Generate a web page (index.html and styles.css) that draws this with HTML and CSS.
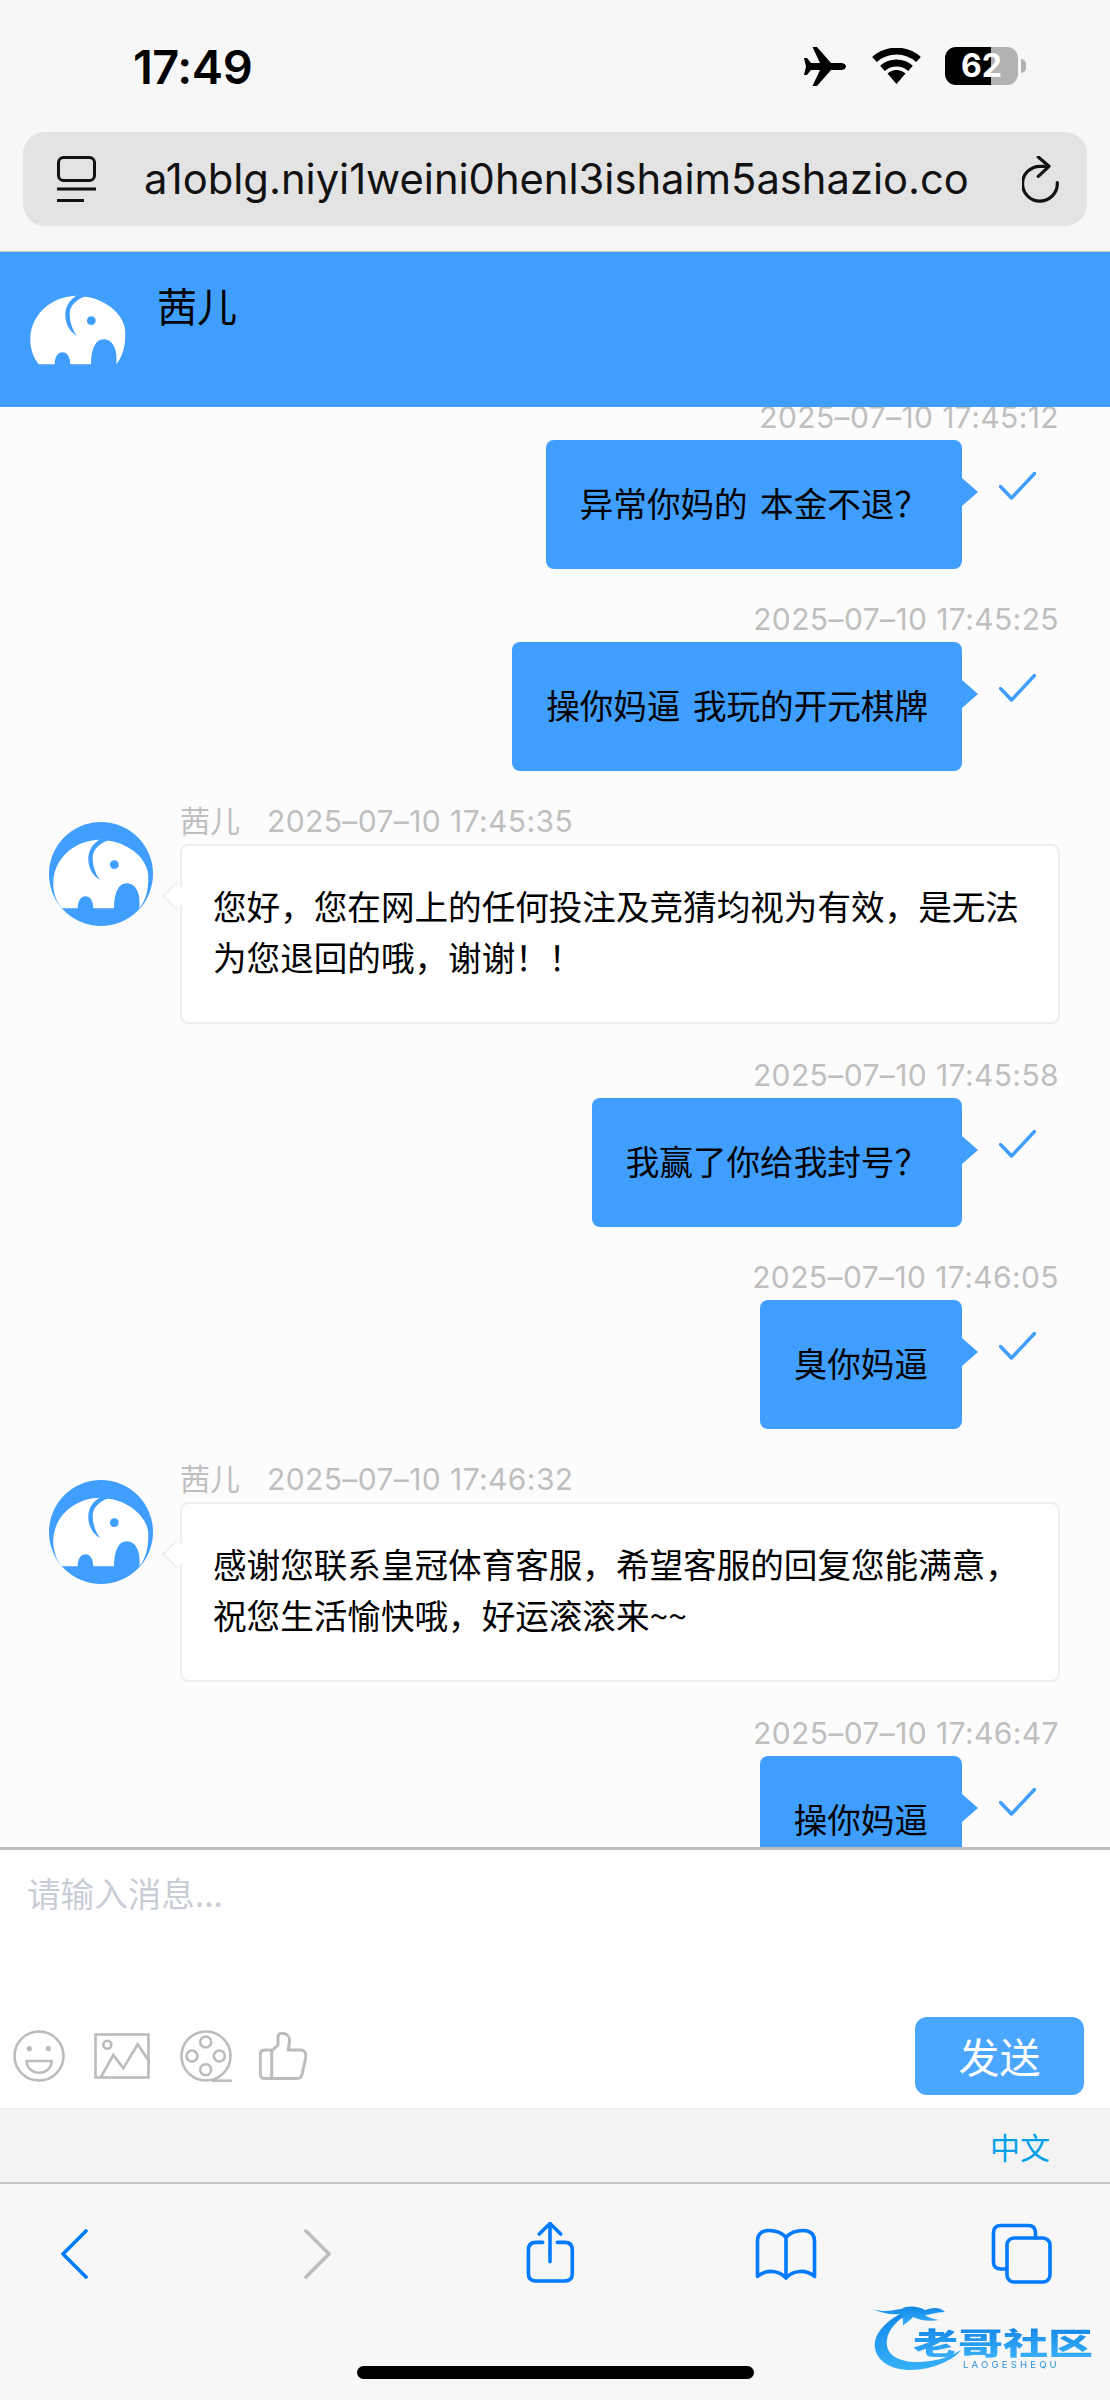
FILE: index.html
```html
<!DOCTYPE html>
<html lang="zh-CN">
<head>
<meta charset="utf-8">
<title>茜儿</title>
<link rel="stylesheet" href="styles.css">
</head>
<body>
<svg class="defs" width="0" height="0" aria-hidden="true">
  <symbol id="elephant" viewBox="0 0 104 104">
    <path class="el-body" d="M12.7 86.3C6 78 4 68 4.3 60 5 36 26 18 51 17.7L60 18.7C82 22 99 38 99.3 54 99.5 68 97 78 90.3 86.3 92 70 86 61.3 77.6 61.3 70 61.3 65 70 65 86.3L44.3 86.3C44.3 79 41 74.3 36.5 74.3 32 74.3 28.7 79 28.7 86.3Z"/>
    <path class="el-cut" d="M51 17.2C43 22 39.3 29 39.3 37 39.3 46 44 54 51 58 46.5 52 43.7 44 43.7 36 43.7 28 50 21 60.5 18Z"/>
    <circle class="el-cut" cx="65.3" cy="42.7" r="4.4"/>
  </symbol>
  <symbol id="check" viewBox="0 0 37 28">
    <polyline class="check-line" points="1.5,14.5 12.5,26 35.5,1.5"/>
  </symbol>
</svg>
<div class="page">
  <div class="chrome">
    <div class="status">
      <span class="time">17:49</span>
      <div class="status-icons">
        <svg class="plane" viewBox="0 0 42 39"><path d="M42 19.5C42 17 39 16 37 16L27 16 13 0 8.5 0 16 16 7 16 3 11 0 11 2 19.5 0 28 3 28 7 23 16 23 8.5 39 13 39 27 23 37 23C39 23 42 22 42 19.5Z"/></svg>
        <svg class="wifi" viewBox="0 0 49 36"><path class="wifi-arc" d="M2.5 11.5A33 33 0 0 1 46.500 11.500"/><path class="wifi-arc" d="M10.500 20.400A21 21 0 0 1 38.500 20.400"/><path d="M24.500 36 15.500 25.500A13 13 0 0 1 33.500 25.500Z"/></svg>
        <div class="battery">62</div>
      </div>
    </div>
    <div class="urlbar">
      <svg class="reader" viewBox="0 0 39 46"><rect x="1.500" y="1.500" width="36" height="23" rx="5"/><path d="M0 33H39M0 44.500H27"/></svg>
      <span class="url">a1oblg.niyi1weini0henl3ishaim5ashazio.co</span>
      <svg class="reload" viewBox="0 0 38 47"><path d="M35.300 26.700A17.400 17.400 0 1 1 18 10.300H26"/><path d="M16.300 1 27 10.300 16.300 20.300"/></svg>
    </div>
  </div>

  <header class="chat-head">
    <svg class="avatar head-avatar"><use href="#elephant"/></svg>
    <span class="chat-name">茜儿</span>
  </header>

  <main class="messages">
    <div class="row out first">
      <div class="meta">2025–07–10 17:45:12</div>
      <div class="line"><div class="bubble">异常你妈的 本金不退？</div><svg class="check"><use href="#check"/></svg></div>
    </div>
    <div class="row out">
      <div class="meta">2025–07–10 17:45:25</div>
      <div class="line"><div class="bubble">操你妈逼 我玩的开元棋牌</div><svg class="check"><use href="#check"/></svg></div>
    </div>
    <div class="row in">
      <svg class="avatar msg-avatar"><use href="#elephant"/></svg>
      <div class="in-body">
        <div class="meta"><span class="sender">茜儿</span>2025–07–10 17:45:35</div>
        <div class="card">您好，您在网上的任何投注及竞猜均视为有效，是无法为您退回的哦，谢谢！！</div>
      </div>
    </div>
    <div class="row out">
      <div class="meta">2025–07–10 17:45:58</div>
      <div class="line"><div class="bubble">我赢了你给我封号？</div><svg class="check"><use href="#check"/></svg></div>
    </div>
    <div class="row out">
      <div class="meta">2025–07–10 17:46:05</div>
      <div class="line"><div class="bubble">臭你妈逼</div><svg class="check"><use href="#check"/></svg></div>
    </div>
    <div class="row in">
      <svg class="avatar msg-avatar"><use href="#elephant"/></svg>
      <div class="in-body">
        <div class="meta"><span class="sender">茜儿</span>2025–07–10 17:46:32</div>
        <div class="card">感谢您联系皇冠体育客服，希望客服的回复您能满意，祝您生活愉快哦，好运滚滚来~~</div>
      </div>
    </div>
    <div class="row out">
      <div class="meta">2025–07–10 17:46:47</div>
      <div class="line"><div class="bubble">操你妈逼</div><svg class="check"><use href="#check"/></svg></div>
    </div>
  </main>

  <section class="composer">
    <div class="placeholder">请输入消息...</div>
    <div class="tools">
      <svg class="tool smile" viewBox="0 0 52 52"><circle cx="26" cy="26" r="24.500"/><path d="M13.700 31H38.700C38.700 38 33 42.700 26.200 42.700S13.700 38 13.700 31Z"/><circle class="dot" cx="16.300" cy="18.700" r="2.600"/><circle class="dot" cx="35.300" cy="18.700" r="2.600"/></svg>
      <svg class="tool picture" viewBox="0 0 56 46"><rect x="1.500" y="1.500" width="53" height="43"/><circle cx="13.300" cy="11.700" r="4"/><path d="M7 44 19.300 22 29.300 35.300 43.700 11.300 56 29.700"/></svg>
      <svg class="tool film" viewBox="0 0 52 52"><circle cx="26" cy="26" r="24.500"/><circle cx="25.700" cy="12" r="5.500"/><circle cx="25.700" cy="39.700" r="5.500"/><circle cx="12" cy="26" r="5.500"/><circle cx="39.300" cy="26" r="5.500"/><path d="M32 50.700H52"/></svg>
      <svg class="tool thumb" viewBox="0 0 48 48"><path d="M12.700 19 19 13V5C19 2 21.500.8 24.300 1.300 28 2 31 5 30.500 9L29.300 18H42C45.500 18 47.500 21 46.700 25.700L43 42.500C42.500 45 40.500 46.500 37.700 46.500H6C3 46.500 1.300 45 1.300 42V22C1.300 19.500 3 18 6 18H12.700V46.500"/></svg>
      <button class="send">发送</button>
    </div>
  </section>

  <div class="lang"><span class="lang-label">中文</span></div>

  <footer class="toolbar">
    <div class="nav-row">
      <svg class="nav back" viewBox="0 0 30 50"><path d="M26 2 3 25 26 48" class="nav-blue"/></svg>
      <svg class="nav forward" viewBox="0 0 30 50"><path d="M4 2 27 25 4 48" class="nav-grey"/></svg>
      <svg class="nav share" viewBox="0 0 51 63"><path class="nav-blue" d="M18.700 20.400H12C7 20.400 4.400 23 4.400 28V51.500C4.400 56.500 7 59 12 59H40.800C45.800 59 48.300 56.500 48.300 51.500V28C48.300 23 45.800 20.400 40.800 20.400H33.300M26 39.700V1.500M15.300 12 26 1.500 36.700 12"/></svg>
      <svg class="nav book" viewBox="0 0 65 54"><path class="nav-blue" d="M32 10.300C28 6 22 3.500 15 3.500 8 3.500 3.500 7 3.500 14V49.500C12 42 25 43 32 51 39 43 52 42 60.500 49.500V14C60.500 7 56 3.500 49 3.500 42 3.500 36 6 32 10.300V51"/></svg>
      <svg class="nav tabs" viewBox="0 0 61 61"><path class="nav-blue" d="M16 46H10C5 46 2.500 43.500 2.500 39V10C2.500 5 5 2.500 10 2.500H37C42 2.500 44.500 5 44.500 10V15"/><rect class="nav-blue" x="16" y="15" width="43" height="44" rx="7"/></svg>
    </div>
    <div class="home-bar"></div>
    <div class="watermark">
      <svg class="dragon" viewBox="0 0 100 75"><defs><linearGradient id="dg" x1="0" y1="0" x2="0" y2="1"><stop offset="0" stop-color="#1288e8"/><stop offset="1" stop-color="#36b0f8"/></linearGradient></defs><path d="M27 14C8 24 0 38 2 48 5 66 28 74 55 68 70 64 82 58 88 50 76 58 60 62 44 62 22 62 12 52 14 40 15 30 24 20 34 15Z"/><path d="M0 9C12 13 20 10 28 9 34 5 46 6 52 10 60 7 68 7 72 12 62 12 58 15 52 15 56 18 60 19 66 20 56 22 46 20 40 17 36 22 32 23 30 26 30 20 30 15 27 14 18 15 8 13 0 9Z"/></svg>
      <div class="wm-title">老哥社区</div>
      <div class="wm-sub">LAOGESHEQU</div>
    </div>
  </footer>
</div>
</body>
</html>
```
FILE: styles.css
```css
* { box-sizing: border-box; }
html, body { margin: 0; padding: 0; }
body {
  width: 1110px;
  height: 2400px;
  overflow: hidden;
  font-family: Inter, "Noto Sans CJK SC", sans-serif;
  color: #000;
  background: #fcfcfc;
  text-spacing-trim: space-all;
}
.defs { position: absolute; }
.page { display: flex; flex-direction: column; width: 1110px; height: 2400px; }

/* browser top */
.chrome { flex: none; height: 252px; background: #f7f7f7; border-bottom: 1px solid #c8c8c8; }
.status { display: flex; align-items: center; height: 132px; padding: 0 92px 0 133px; }
.time { font-size: 47px; font-weight: 600; letter-spacing: -.5px; }
.status-icons { display: flex; align-items: center; margin-left: auto; }
.plane { width: 42px; height: 39px; margin-right: 26px; }
.wifi { width: 49px; height: 36px; margin-right: 24px; }
.wifi-arc { fill: none; stroke: #000; stroke-width: 7; }
.battery {
  position: relative;
  width: 73px;
  height: 38px;
  border-radius: 11px;
  background: linear-gradient(90deg, #000 63%, #b2b2b2 63%);
  color: #fff;
  font-size: 32px;
  font-weight: 700;
  line-height: 38px;
  text-align: center;
}
.battery::after {
  content: "";
  position: absolute;
  right: -8px;
  top: 12px;
  width: 5px;
  height: 14px;
  border-radius: 0 7px 7px 0;
  background: #b2b2b2;
}
.urlbar {
  display: flex;
  align-items: center;
  height: 94px;
  margin: 0 23px;
  padding: 0 27px 0 34px;
  border-radius: 22px;
  background: #e3e3e3;
}
.reader { flex: none; width: 39px; height: 46px; margin-right: 48px; fill: none; stroke: #111; stroke-width: 3; }
.url { flex: 1; font-size: 41.7px; white-space: nowrap; overflow: hidden; color: #111; }
.reload { flex: none; width: 38px; height: 47px; fill: none; stroke: #111; stroke-width: 3.2; stroke-linecap: round; stroke-linejoin: round; }

/* chat header */
.chat-head { flex: none; display: flex; align-items: flex-start; height: 155px; padding: 26px 0 0 26px; background: #409eff; }
.avatar { flex: none; width: 104px; height: 104px; }
.el-body { fill: #fff; }
.el-cut { fill: #409eff; }
.head-avatar { margin-right: 27px; }
.chat-name { margin-top: 2px; font-size: 40px; line-height: 56px; }

/* messages */
.messages { flex: 1; min-height: 0; overflow: hidden; background: #fcfcfc; }
.row { margin-bottom: 33px; }
.first { margin-top: -7px; }
.meta { height: 34px; margin-bottom: 6px; font-size: 30px; line-height: 34px; letter-spacing: .4px; color: #bfbfbf; white-space: nowrap; }
.out { padding-right: 51px; }
.out .meta { text-align: right; }
.line { display: flex; justify-content: flex-end; align-items: flex-start; }
.bubble {
  position: relative;
  padding: 39px 34px;
  border-radius: 8px;
  background: #409eff;
  font-size: 33.6px;
  line-height: 51px;
  word-spacing: 3px;
}
.bubble::after {
  content: "";
  position: absolute;
  left: 100%;
  top: 38px;
  border-style: solid;
  border-width: 14px 0 14px 16px;
  border-color: transparent transparent transparent #409eff;
}
.check { flex: none; width: 37px; height: 28px; margin: 32px 23px 0 37px; }
.check-line { fill: none; stroke: #409eff; stroke-width: 3.5; stroke-linecap: round; stroke-linejoin: round; }

.in { display: flex; align-items: flex-start; padding-left: 49px; margin-bottom: 34px; }
.msg-avatar { margin: 18px 27px 0 0; border-radius: 50%; background: #409eff; }
.in-body { width: 880px; }
.sender { margin-right: 27px; letter-spacing: 0; }
.card {
  position: relative;
  padding: 34px 31px 40px;
  border: 2px solid #eeeeee;
  border-radius: 8px;
  background: #fff;
  font-family: "Noto Sans CJK SC", sans-serif;
  font-size: 33.6px;
  line-height: 51px;
}
.card::before {
  content: "";
  position: absolute;
  left: -16px;
  top: 40px;
  width: 18px;
  height: 18px;
  border-left: 2px solid #eeeeee;
  border-bottom: 2px solid #eeeeee;
  background: #fff;
  transform: rotate(45deg);
}

/* composer */
.composer { flex: none; height: 261px; border-top: 3px solid #bcbcbc; background: #fff; }
.placeholder { height: 68px; padding: 18px 0 0 27px; font-family: "Noto Sans CJK SC", sans-serif; font-size: 33.6px; line-height: 50px; color: #c9cdd6; }
.tools { display: flex; align-items: center; height: 78px; margin-top: 99px; padding: 0 26px 0 13px; }
.tool { flex: none; fill: none; stroke: #bcbcbc; stroke-width: 2.6; }
.smile, .film { width: 52px; height: 52px; }
.smile .dot { fill: #bcbcbc; stroke: none; }
.picture { width: 56px; height: 46px; margin: 0 30px 0 29px; }
.thumb { width: 48px; height: 48px; margin-left: 27px; stroke-width: 3; stroke-linejoin: round; }
.send {
  width: 169px;
  height: 78px;
  margin-left: auto;
  padding: 0 0 2px;
  border: 0;
  border-radius: 12px;
  background: #4aa6ff;
  color: #fff;
  font-family: inherit;
  font-size: 41px;
}

.lang { flex: none; display: flex; align-items: center; justify-content: flex-end; height: 76px; padding: 0 60px 0 0; border-bottom: 2px solid #c4c4c4; border-top: 1px solid #ececec; background: #f3f3f3; }
.lang-label { font-size: 30px; color: #00a0e9; }

/* browser bottom */
.toolbar { position: relative; flex: none; height: 216px; padding-top: 39px; background: #f7f7f7; }
.nav-row { display: flex; align-items: center; height: 61px; padding-left: 60px; }
.nav { flex: none; }
.nav-blue, .nav-grey { fill: none; stroke-width: 3.600; stroke-linecap: round; stroke-linejoin: round; }
.nav-blue { stroke: #007aff; }
.nav-grey { stroke: #bdbdbd; }
.back, .forward { width: 30px; height: 50px; }
.forward { margin-left: 212px; }
.share { width: 51px; height: 63px; margin-left: 192px; }
.book { width: 65px; height: 54px; margin-left: 179px; }
.tabs { width: 61px; height: 61px; margin-left: 172px; }
.home-bar { width: 397px; height: 13px; margin: 82px 0 0 357px; border-radius: 7px; background: #000; }

.watermark { position: absolute; left: 873px; top: 116px; width: 225px; height: 75px; filter: blur(.7px); }
.dragon { position: absolute; left: 0; top: 0; width: 100px; height: 75px; fill: url(#dg); }
.wm-title {
  position: absolute;
  left: 40px;
  top: 25px;
  width: 120px;
  font-size: 30px;
  font-weight: 900;
  line-height: 36px;
  white-space: nowrap;
  transform: scaleX(1.5);
  transform-origin: left top;
  color: transparent;
  background: linear-gradient(180deg, #1285e6, #3db4fb);
  -webkit-background-clip: text;
  background-clip: text;
}
.wm-sub { position: absolute; left: 90px; top: 59px; font-size: 9.5px; line-height: 12px; letter-spacing: 3.2px; color: #2b8fdc; white-space: nowrap; }
```
